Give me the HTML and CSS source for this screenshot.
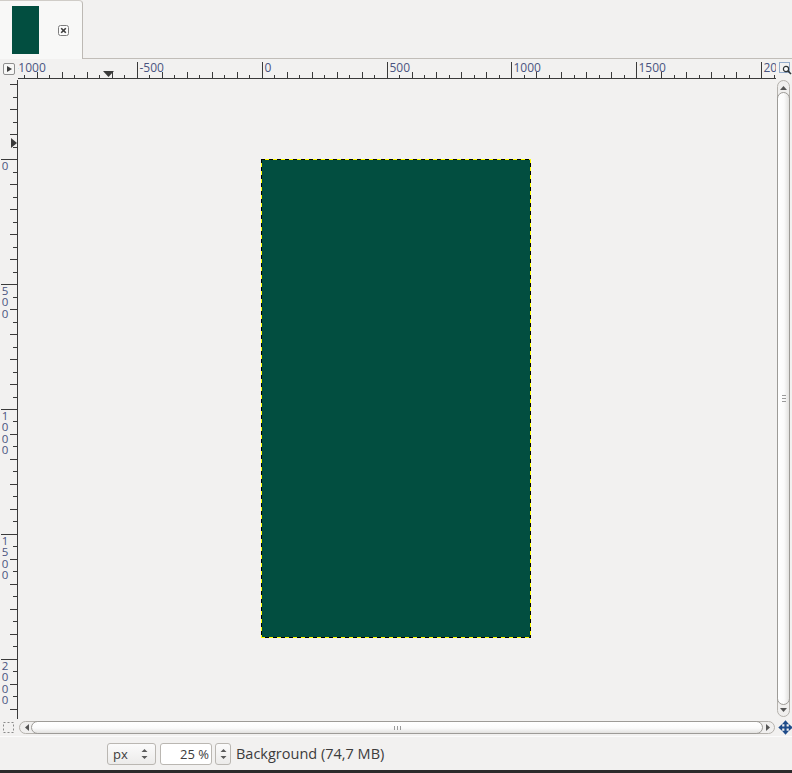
FILE: index.html
```html
<!DOCTYPE html>
<html lang="en">
<head>
<meta charset="utf-8">
<title>GIMP image window</title>
<link rel="stylesheet" href="styles.css">
</head>
<body>
<div class="window">
  <div class="tabbar">
    <div class="tab">
      <div class="thumb"></div>
      <span class="tab-close">
        <svg width="11" height="11" viewBox="0 0 11 11"><rect x="0.5" y="0.5" width="10" height="10" rx="2" fill="#fbfbfb" stroke="#7d7d7d"/><path d="M3.2 3.2l4.6 4.6M7.8 3.2l-4.6 4.6" stroke="#3c3c3c" stroke-width="1.6"/></svg>
      </span>
    </div>
  </div>

  <div class="display">
    <div class="corner-tl">
      <svg width="12" height="12" viewBox="0 0 12 12"><rect x="0.5" y="0.5" width="11" height="11" rx="1.5" fill="#f7f7f6" stroke="#8f8f8f"/><path d="M4 3l5 3-5 3z" fill="#3c3c3c"/></svg>
    </div>
    <svg class="hruler" id="hruler" width="758" height="21" viewBox="0 0 758 21"></svg>
    <div class="corner-tr">
      <svg width="13" height="13" viewBox="0 0 13 13"><rect x="0.5" y="0.5" width="10" height="10" fill="none" stroke="#3465a4" stroke-dasharray="1 1"/><circle cx="7" cy="7" r="2.6" fill="#fff" stroke="#2e3436" stroke-width="1.2"/><path d="M8.8 8.8l3.2 3.2" stroke="#2e3436" stroke-width="1.6"/></svg>
    </div>

    <svg class="vruler" id="vruler" width="18" height="639" viewBox="0 0 18 639"></svg>
    <div class="canvas">
      <div class="image"></div>
    </div>
    <div class="vscroll">
      <div class="vtrack">
        <div class="vbtn vbtn-up"><svg width="7" height="4" viewBox="0 0 7 4"><path d="M0 4L3.5 0 7 4z" fill="#555"/></svg></div>
        <div class="vthumb"><svg width="4" height="7" viewBox="0 0 4 7"><path d="M0 0.5h4M0 3.5h4M0 6.5h4" stroke="#9a9a9a"/></svg></div>
        <div class="vbtn vbtn-down"><svg width="7" height="4" viewBox="0 0 7 4"><path d="M0 0L3.5 4 7 0z" fill="#555"/></svg></div>
      </div>
    </div>

    <div class="qmask">
      <svg width="11" height="11" viewBox="0 0 11 11"><rect x="0.5" y="0.5" width="10" height="10" fill="none" stroke="#8a8a8a" stroke-dasharray="2 2"/></svg>
    </div>
    <div class="hscroll">
      <div class="htrack">
        <div class="hbtn hbtn-left"><svg width="4" height="7" viewBox="0 0 4 7"><path d="M4 0L0 3.5 4 7z" fill="#555"/></svg></div>
        <div class="hthumb"><svg width="7" height="4" viewBox="0 0 7 4"><path d="M0.5 0v4M3.5 0v4M6.5 0v4" stroke="#9a9a9a"/></svg></div>
        <div class="hbtn hbtn-right"><svg width="4" height="7" viewBox="0 0 4 7"><path d="M0 0L4 3.5 0 7z" fill="#555"/></svg></div>
      </div>
    </div>
    <div class="nav">
      <svg width="15" height="15" viewBox="0 0 15 15"><path d="M7.5 0.3L11 4.2H4Z M7.5 14.7L11 10.8H4Z M0.3 7.5L4.2 4V11Z M14.7 7.5L10.8 4V11Z" fill="#1f4c8a"/><path d="M7.5 3v9M3 7.5h9" stroke="#1f4c8a" stroke-width="2.2"/></svg>
    </div>
  </div>

  <div class="statusbar">
    <div class="combo">
      <span class="combo-text">px</span>
      <svg class="updown" width="7" height="12" viewBox="0 0 7 12"><path d="M0.5 4L3.5 1 6.5 4z M0.5 8L3.5 11 6.5 8z" fill="#5a5a5a"/></svg>
    </div>
    <div class="zoom-entry">25 %</div>
    <div class="spin">
      <svg class="updown" width="7" height="12" viewBox="0 0 7 12"><path d="M0.5 4L3.5 1 6.5 4z M0.5 8L3.5 11 6.5 8z" fill="#5a5a5a"/></svg>
    </div>
    <span class="layer-label">Background (74,7 MB)</span>
  </div>
  <div class="bottom-band"></div>
</div>
<script src="ruler.js"></script>
</body>
</html>
```

FILE: styles.css
```css
* { box-sizing: border-box; }

html, body {
  margin: 0;
  padding: 0;
  background: #f2f1f0;
}

body {
  font-family: "Open Sans", "DejaVu Sans", sans-serif;
  color: #3c3c3c;
  width: 792px;
  height: 773px;
  overflow: hidden;
}

.window {
  display: flex;
  flex-direction: column;
  width: 792px;
  height: 773px;
}

/* ---------- tab strip ---------- */
.tabbar {
  height: 59px;
  border-bottom: 1px solid #c1bdb8;
  display: flex;
  align-items: flex-start;
}

.tab {
  position: relative;
  width: 83px;
  height: 59px;
  margin-bottom: -1px;
  background: #f8f8f7;
  border-top: 1px solid #d0cdc8;
  border-right: 1px solid #bdb9b4;
  border-top-right-radius: 4px;
  display: flex;
  align-items: flex-start;
  padding: 5px 0 0 12px;
}

.thumb {
  width: 27px;
  height: 48px;
  background: #024e40;
}

.tab-close {
  display: block;
  width: 11px;
  height: 11px;
  margin: 19px 0 0 19px;
}
.tab-close svg { display: block; }

/* ---------- display grid ---------- */
.display {
  display: grid;
  grid-template-columns: 18px 758px 16px;
  grid-template-rows: 21px 639px 17px;
}

.corner-tl {
  padding: 4px 0 0 3px;
}
.corner-tl svg { display: block; }

.hruler, .vruler { display: block; }

.corner-tr {
  padding: 3px 0 0 3px;
}
.corner-tr svg { display: block; }

.tk {
  fill: none;
  stroke: #3a3a3a;
  stroke-width: 1;
  shape-rendering: crispEdges;
}
.mk { fill: #3a3a3a; }
.rl {
  font-family: "Open Sans", "DejaVu Sans", sans-serif;
  font-size: 12px;
  fill: #4a5480;
}
.rlv {
  font-family: "Open Sans", "DejaVu Sans", sans-serif;
  font-size: 11.5px;
  fill: #4a5480;
}

.canvas {
  background: #f2f1f0;
  overflow: hidden;
  padding: 79px 0 0 243px;
}

.image {
  width: 270px;
  height: 479px;
  background-color: #024e40;
  background-image:
    repeating-linear-gradient(90deg, #000 0 4px, #ffff00 4px 8px),
    repeating-linear-gradient(90deg, #ffff00 0 4px, #000 4px 8px),
    repeating-linear-gradient(180deg, #000 0 4px, #ffff00 4px 8px),
    repeating-linear-gradient(180deg, #ffff00 0 4px, #000 4px 8px);
  background-size: 100% 1px, 100% 1px, 1px 100%, 1px 100%;
  background-position: 0 0, 0 100%, 0 0, 100% 0;
  background-repeat: no-repeat;
}

/* ---------- scrollbars ---------- */
.vscroll {
  padding: 0 2px 2px 1px;
  display: flex;
}
.vtrack {
  flex: 1;
  display: flex;
  flex-direction: column;
  border: 1px solid #b5b2ad;
  border-radius: 7px;
  background: #f0efee;
}
.vbtn {
  display: flex;
  justify-content: center;
  align-items: center;
}
.vbtn-up { height: 11px; padding-top: 2px; }
.vbtn-down { height: 11px; padding-bottom: 2px; }
.vthumb {
  flex: 1;
  margin: 0 -1px;
  border: 1px solid #9d9b97;
  border-radius: 7px;
  background: linear-gradient(90deg, #ffffff 0%, #fbfbfb 55%, #e2e1df 100%);
  display: flex;
  align-items: center;
  justify-content: center;
}
.vthumb svg, .hthumb svg, .vbtn svg, .hbtn svg { display: block; }

.qmask {
  padding: 3px 0 0 3px;
}
.qmask svg { display: block; }

.hscroll {
  padding: 2px 1px 2px 1px;
  display: flex;
}
.htrack {
  flex: 1;
  display: flex;
  border: 1px solid #b5b2ad;
  border-radius: 7px;
  background: #f0efee;
}
.hbtn {
  display: flex;
  align-items: center;
  justify-content: center;
}
.hbtn-left { width: 11px; padding-left: 2px; }
.hbtn-right { width: 11px; padding-right: 2px; }
.hthumb {
  flex: 1;
  margin: -1px 0;
  border: 1px solid #9d9b97;
  border-radius: 7px;
  background: linear-gradient(180deg, #ffffff 0%, #fbfbfb 55%, #e2e1df 100%);
  display: flex;
  align-items: center;
  justify-content: center;
}

.nav {
  padding: 1px 0 0 2px;
}
.nav svg { display: block; }

/* ---------- status bar ---------- */
.statusbar {
  height: 34px;
  border-top: 1px solid #fbfbfb;
  display: flex;
  align-items: center;
  padding-left: 107px;
  font-size: 13px;
}

.combo {
  width: 49px;
  height: 22px;
  border: 1px solid #bab7b2;
  border-radius: 3px;
  background: linear-gradient(180deg, #fbfbfb, #ecebea);
  display: flex;
  align-items: center;
  justify-content: space-between;
  padding: 0 7px 0 5px;
}

.updown { display: block; }

.zoom-entry {
  width: 52px;
  height: 22px;
  margin-left: 4px;
  border: 1px solid #bab7b2;
  border-radius: 3px;
  background: #ffffff;
  display: flex;
  align-items: center;
  justify-content: flex-end;
  padding-right: 2px;
}

.spin {
  width: 16px;
  height: 22px;
  margin-left: 3px;
  border: 1px solid #bab7b2;
  border-radius: 3px;
  background: linear-gradient(180deg, #fbfbfb, #ecebea);
  display: flex;
  align-items: center;
  justify-content: center;
}

.layer-label {
  margin-left: 5px;
  font-size: 14.5px;
}

.bottom-band {
  height: 3px;
  background: #2b2b2b;
}
```

FILE: ruler.js
```js
(function () {
  var NS = 'http://www.w3.org/2000/svg';
  var s = 124.85 / 500;

  function el(name, attrs, text) {
    var e = document.createElementNS(NS, name);
    for (var k in attrs) e.setAttribute(k, attrs[k]);
    if (text != null) e.textContent = text;
    return e;
  }

  /* horizontal ruler: occupies x 18..776, y 59..80 */
  var h = document.getElementById('hruler');
  var hx0 = 261.7 - 18, W = 758;
  var d = '';
  for (var u = -1500; u <= 2500; u += 50) {
    var x = Math.round(hx0 + u * s);
    if (u % 500 === 0 && x > -40 && x < W) {
      h.appendChild(el('text', { x: x + 2.5, y: 12.8, 'class': 'rl' }, String(u)));
    }
    if (x < 0 || x >= W) continue;
    var top = (u % 500 === 0) ? 3 : ((u % 100 === 0) ? 13 : 16);
    d += 'M' + (x + 0.5) + ' ' + top + 'V19';
  }
  d += 'M0 19.5H' + W;
  h.insertBefore(el('path', { d: d, 'class': 'tk' }), h.firstChild);
  h.appendChild(el('path', { d: 'M85 12H96L90.5 18Z', 'class': 'mk' }));

  /* vertical ruler: occupies x 0..18, y 80..719 */
  var v = document.getElementById('vruler');
  var vy0 = 159.3 - 80, H = 639;
  d = '';
  for (u = -1500; u <= 2500; u += 50) {
    var y = Math.round(vy0 + u * s);
    if (y < 0 || y >= H) continue;
    var left = (u % 500 === 0) ? 1 : ((u % 100 === 0) ? 10 : 13);
    d += 'M' + left + ' ' + (y + 0.5) + 'H17';
    if (u % 500 === 0) {
      var str = String(u);
      var t = el('text', { 'class': 'rlv' });
      for (var i = 0; i < str.length; i++) {
        t.appendChild(el('tspan', { x: 1.8, y: y + 11 + i * 11.3 }, str.charAt(i)));
      }
      v.appendChild(t);
    }
  }
  d += 'M17.5 0V' + H;
  v.insertBefore(el('path', { d: d, 'class': 'tk' }), v.firstChild);
  v.appendChild(el('path', { d: 'M11 58V68L17 63Z', 'class': 'mk' }));
})();
```
